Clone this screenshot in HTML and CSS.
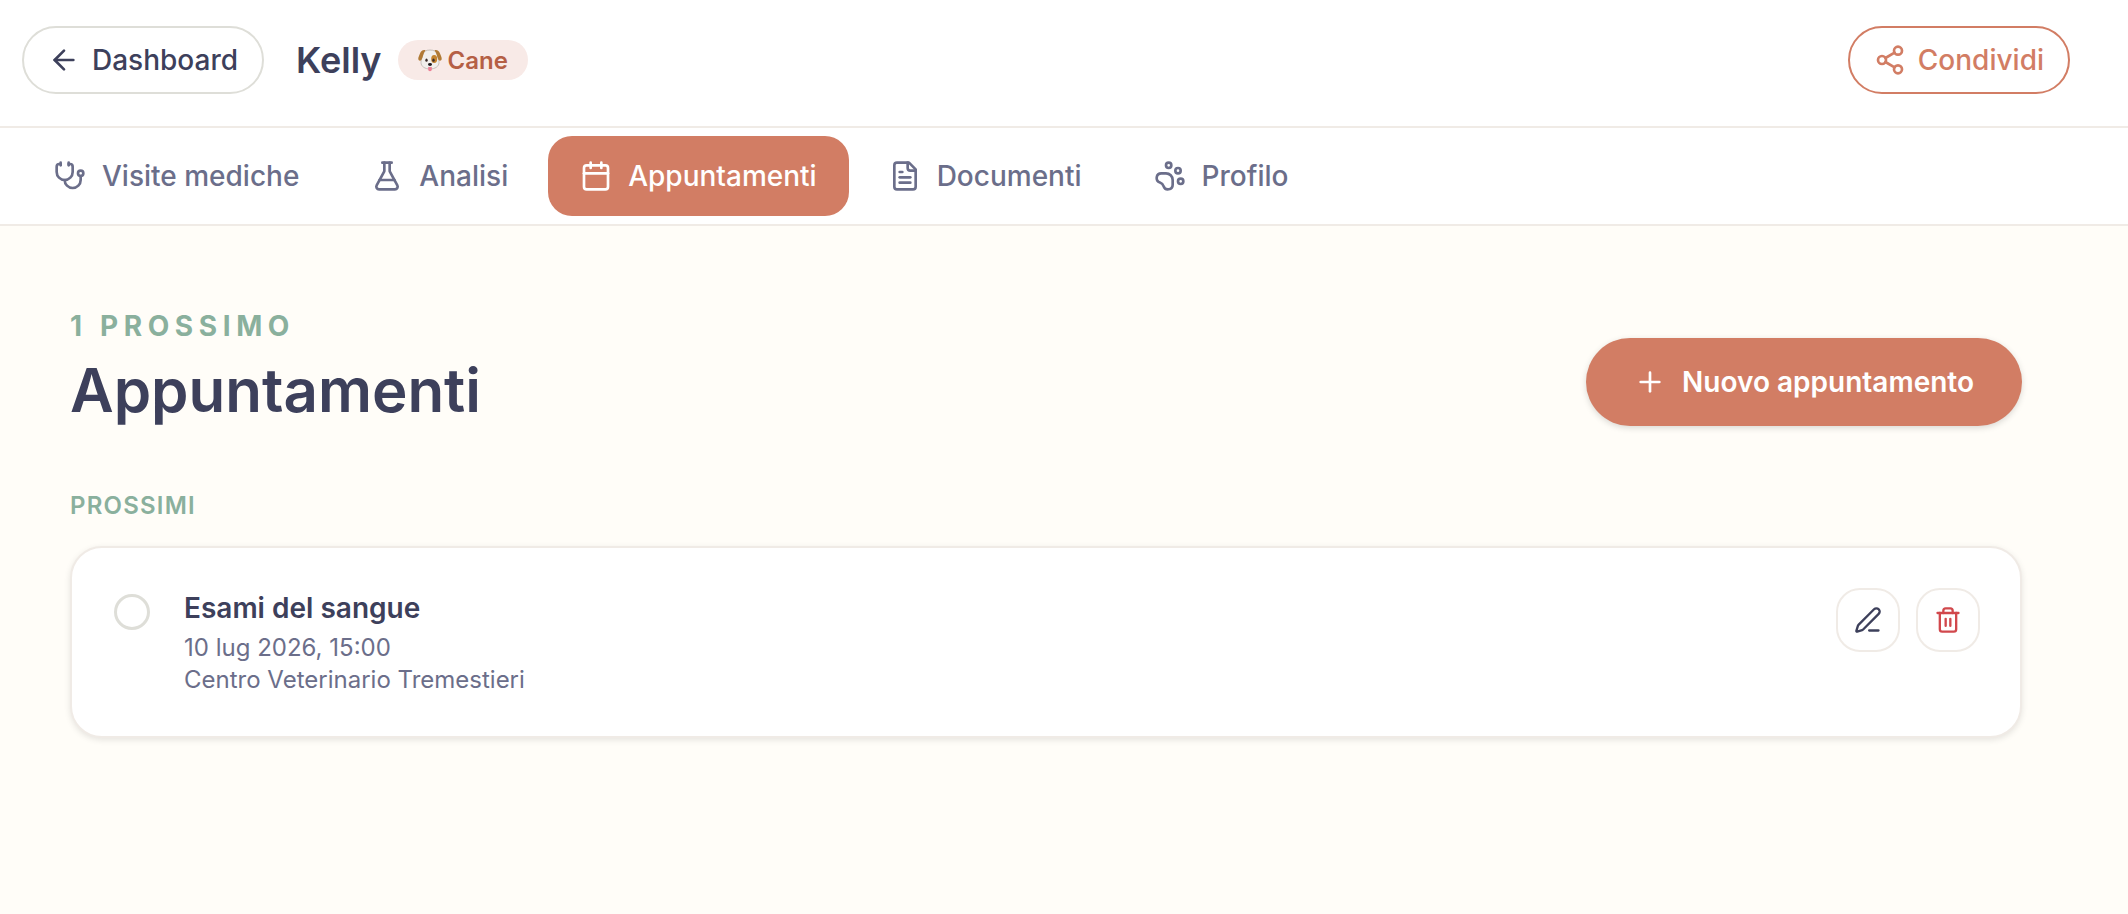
FILE: index.html
```html
<!DOCTYPE html>
<html lang="it">
<head>
    <meta charset="UTF-8">
    <meta name="viewport" content="width=device-width, initial-scale=1.0">
    <title>Kelly - Appuntamenti</title>
    <link rel="stylesheet" href="styles.css">
</head>
<body>
    <header class="topbar">
        <a class="btn-outline" href="#dashboard">
            <svg class="icon" viewBox="0 0 24 24"><path d="m12 19-7-7 7-7"/><path d="M19 12H5"/></svg>
            Dashboard
        </a>
        <div class="pet">
            <span class="pet-name">Kelly</span>
            <span class="badge">
                <svg class="dog" viewBox="0 0 24 24" aria-hidden="true">
                    <path d="M12 2c4 0 6.500 1.500 7.500 5 .6 2.500 1.500 5 1.500 7.500 0 4-4 6.500-9 6.500s-9-2.500-9-6.500C3 12 3.900 9.500 4.500 7 5.500 3.500 8 2 12 2z" fill="#f1efec" stroke="#b9b2ac" stroke-width="0.8"/>
                    <path d="M7.500 2.200C4.500 1.600 3 3 2 5.500.900 8 .2 9.500.3 11c.2 1.800 2.200 2.200 3.200.8C5 9.500 5 5.500 7.500 2.200z" fill="#b07a35"/>
                    <path d="M16.500 2.200c3-.6 4.500.8 5.500 3.300 1.100 2.500 1.800 4 1.700 5.500-.2 1.800-2.200 2.200-3.200.8-1.500-2.300-1.500-6.300-4-9.600z" fill="#b07a35"/>
                    <ellipse cx="16.200" cy="11" rx="3" ry="4" fill="#c4842f"/>
                    <ellipse cx="8.500" cy="12.200" rx="1.200" ry="1.600" fill="#3a2c28"/>
                    <ellipse cx="15.500" cy="12.200" rx="1.200" ry="1.600" fill="#3a2c28"/>
                    <ellipse cx="12" cy="16.500" rx="2" ry="1.400" fill="#1f1c1f"/>
                    <path d="M10.200 19h3.600v2.500a1.800 1.800 0 0 1-3.600 0z" fill="#ec7f95"/>
                </svg>
                Cane
            </span>
        </div>
        <button class="btn-outline btn-share" type="button">
            <svg class="icon" viewBox="0 0 24 24"><circle cx="18" cy="5" r="3"/><circle cx="6" cy="12" r="3"/><circle cx="18" cy="19" r="3"/><path d="m8.590 13.510 6.830 3.980M15.410 6.510l-6.820 3.980"/></svg>
            Condividi
        </button>
    </header>

    <nav class="tabs">
        <a class="tab" href="#visite">
            <svg class="icon" viewBox="0 0 24 24"><path d="M11 2v2"/><path d="M5 2v2"/><path d="M5 3H4a2 2 0 0 0-2 2v4a6 6 0 0 0 12 0V5a2 2 0 0 0-2-2h-1"/><path d="M8 15a6 6 0 0 0 12 0v-3"/><circle cx="20" cy="10" r="2"/></svg>
            Visite mediche
        </a>
        <a class="tab" href="#analisi">
            <svg class="icon" viewBox="0 0 24 24"><path d="M14 2v6a2 2 0 0 0 .245.960l5.510 10.080A2 2 0 0 1 18 22H6a2 2 0 0 1-1.755-2.960l5.510-10.080A2 2 0 0 0 10 8V2"/><path d="M6.453 15h11.094"/><path d="M8.500 2h7"/></svg>
            Analisi
        </a>
        <a class="tab active" href="#appuntamenti" aria-current="page">
            <svg class="icon" viewBox="0 0 24 24"><path d="M8 2v4"/><path d="M16 2v4"/><rect width="18" height="18" x="3" y="4" rx="2"/><path d="M3 10h18"/></svg>
            Appuntamenti
        </a>
        <a class="tab" href="#documenti">
            <svg class="icon" viewBox="0 0 24 24"><path d="M15 2H6a2 2 0 0 0-2 2v16a2 2 0 0 0 2 2h12a2 2 0 0 0 2-2V7Z"/><path d="M14 2v4a2 2 0 0 0 2 2h4"/><path d="M10 9H8"/><path d="M16 13H8"/><path d="M16 17H8"/></svg>
            Documenti
        </a>
        <a class="tab" href="#profilo">
            <svg class="icon" viewBox="0 0 24 24"><circle cx="11" cy="4" r="2"/><circle cx="18" cy="8" r="2"/><circle cx="20" cy="16" r="2"/><path d="M9 10a5 5 0 0 1 5 5v3.500a3.500 3.500 0 0 1-6.840 1.045Q6.520 17.480 4.460 16.840A3.500 3.500 0 0 1 5.500 10Z"/></svg>
            Profilo
        </a>
    </nav>

    <main class="content">
        <div class="page-head">
            <div>
                <p class="eyebrow">1 PROSSIMO</p>
                <h1>Appuntamenti</h1>
            </div>
            <button class="btn-primary" type="button">
                <svg class="icon" viewBox="0 0 24 24"><path d="M5 12h14"/><path d="M12 5v14"/></svg>
                Nuovo appuntamento
            </button>
        </div>

        <h2>PROSSIMI</h2>
        <article class="card">
            <input class="check" type="checkbox" id="esami">
            <div class="card-text">
                <label class="card-title" for="esami">Esami del sangue</label>
                <p>10 lug 2026, 15:00</p>
                <p>Centro Veterinario Tremestieri</p>
            </div>
            <div class="actions">
                <button class="btn-icon" type="button" aria-label="Modifica">
                    <svg class="icon" viewBox="0 0 24 24"><path d="M13 21h8"/><path d="M21.174 6.812a1 1 0 0 0-3.986-3.987L3.842 16.174a2 2 0 0 0-.5.830l-1.321 4.352a.5.5 0 0 0 .623.622l4.353-1.320a2 2 0 0 0 .830-.497z"/></svg>
                </button>
                <button class="btn-icon danger" type="button" aria-label="Elimina">
                    <svg class="icon" viewBox="0 0 24 24"><path d="M3 6h18"/><path d="M19 6v14a2 2 0 0 1-2 2H7a2 2 0 0 1-2-2V6"/><path d="M8 6V4a2 2 0 0 1 2-2h4a2 2 0 0 1 2 2v2"/><path d="M10 11v6"/><path d="M14 11v6"/></svg>
                </button>
            </div>
        </article>
    </main>
</body>
</html>
```
FILE: styles.css
```css
* {
    box-sizing: border-box;
}
body {
    margin: 0;
    font-family: Inter, "Liberation Sans", sans-serif;
    font-size: 28px;
    color: #3d405b;
    background-color: #fffdf8;
}
h1, h2, p {
    margin: 0;
}
button {
    font: inherit;
    cursor: pointer;
}
a {
    text-decoration: none;
}
.icon {
    width: 32px;
    height: 32px;
    flex-shrink: 0;
    fill: none;
    stroke: currentColor;
    stroke-width: 2;
    stroke-linecap: round;
    stroke-linejoin: round;
}

/* header */
.topbar {
    display: flex;
    align-items: center;
    gap: 32px;
    height: 128px;
    padding: 0 58px 6px 22px;
    background: white;
    border-bottom: 2px solid #f0ebe6;
}
.btn-outline {
    display: flex;
    align-items: center;
    gap: 12px;
    height: 68px;
    padding: 0 24px;
    border: 2px solid #deded8;
    border-radius: 34px;
    background: white;
    color: #3d405b;
    font-weight: 500;
}
.btn-share {
    margin-left: auto;
    border-color: #d27d64;
    color: #d27d64;
}
.pet {
    display: flex;
    align-items: center;
    gap: 16px;
}
.pet-name {
    font-size: 36px;
    font-weight: 600;
}
.badge {
    display: flex;
    align-items: center;
    gap: 6px;
    height: 40px;
    padding: 0 20px;
    border-radius: 20px;
    background: #f8eae7;
    color: #b55f45;
    font-size: 24px;
    font-weight: 600;
}
.dog {
    width: 24px;
    height: 24px;
}

/* tabs */
.tabs {
    display: flex;
    gap: 8px;
    padding: 8px 22px;
    background: white;
    border-bottom: 2px solid #f0ebe6;
}
.tab {
    display: flex;
    align-items: center;
    gap: 16px;
    height: 80px;
    padding: 0 32px;
    border-radius: 24px;
    color: #6b6e8a;
    font-weight: 500;
}
.tab.active {
    background: #d27d64;
    color: white;
}

/* page */
.content {
    padding: 80px 106px 80px 70px;
}
.page-head {
    display: flex;
    align-items: flex-end;
    justify-content: space-between;
    margin-bottom: 64px;
}
.eyebrow {
    font-weight: 700;
    line-height: 40px;
    letter-spacing: 0.2em;
    color: #8ab09d;
}
h1 {
    margin-top: 8px;
    font-size: 60px;
    font-weight: 600;
    line-height: 72px;
}
.btn-primary {
    display: flex;
    align-items: center;
    gap: 16px;
    height: 88px;
    padding: 0 48px;
    border: none;
    border-radius: 44px;
    background: #d27d64;
    color: white;
    font-weight: 600;
    box-shadow: 0 2px 6px rgba(0, 0, 0, 0.15);
}
h2 {
    margin-bottom: 24px;
    font-size: 24px;
    font-weight: 600;
    line-height: 32px;
    letter-spacing: 0.05em;
    color: #8ab09d;
}
.card {
    display: flex;
    align-items: flex-start;
    padding: 40px;
    border: 2px solid #f0ebe6;
    border-radius: 32px;
    background: white;
    box-shadow: 0 2px 6px rgba(0, 0, 0, 0.1);
}
.check {
    appearance: none;
    width: 36px;
    height: 36px;
    margin: 6px 34px 0 2px;
    border: 3px solid #deded8;
    border-radius: 50%;
}
.card-text {
    flex: 1;
    font-size: 24px;
    line-height: 32px;
    color: #6b6e8a;
}
.card-title {
    display: block;
    margin-bottom: 4px;
    font-size: 28px;
    font-weight: 600;
    line-height: 40px;
    color: #3d405b;
}
.actions {
    display: flex;
    gap: 16px;
}
.btn-icon {
    display: flex;
    align-items: center;
    justify-content: center;
    width: 64px;
    height: 64px;
    padding: 0;
    border: 2px solid #f0ebe6;
    border-radius: 24px;
    background: white;
    color: #3d405b;
}
.btn-icon .icon {
    width: 28px;
    height: 28px;
}
.btn-icon.danger {
    color: #d1484c;
}
```
